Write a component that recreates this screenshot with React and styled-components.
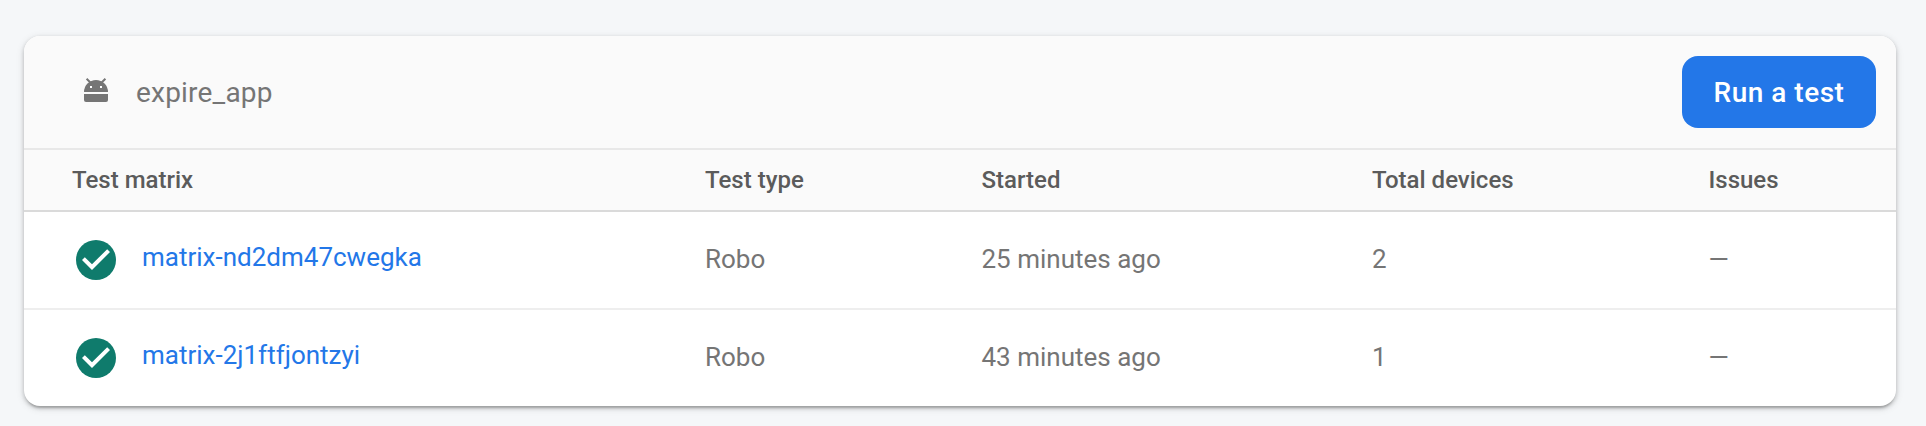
import React from "react";
import styled, { createGlobalStyle } from "styled-components";

const GlobalStyle = createGlobalStyle`
  * { box-sizing: border-box; }
  body {
    margin: 0;
    background: #f5f7f9;
    font-family: Roboto, "Liberation Sans", sans-serif;
    -webkit-font-smoothing: antialiased;
  }
`;

const Page = styled.main`
  height: 426px;
  padding: 36px 30px 20px 24px;
  overflow: hidden;
`;

const Card = styled.section`
  width: 1872px;
  border-radius: 16px;
  background: #fff;
  box-shadow: 0 4px 2px -2px rgba(0, 0, 0, 0.16), 0 2px 4px rgba(0, 0, 0, 0.2),
    0 2px 8px rgba(0, 0, 0, 0.12);
`;

const CardHeader = styled.header`
  display: flex;
  align-items: center;
  height: 114px;
  padding: 0 20px 0 48px;
  border-bottom: 2px solid #e8e8e8;
  border-radius: 16px 16px 0 0;
  background: #fafafa;
`;

const AppName = styled.h2`
  flex: 1;
  margin: 0 0 0 16px;
  padding-top: 2px;
  font-size: 28px;
  line-height: 40px;
  font-weight: 400;
  letter-spacing: 0.2px;
  color: #757575;
`;

const RunButton = styled.button`
  width: 194px;
  height: 72px;
  padding: 2px 0 0;
  border: 0;
  border-radius: 16px;
  background: #2377e8;
  color: #fff;
  font: 500 28px/40px Roboto, "Liberation Sans", sans-serif;
  letter-spacing: 0.5px;
`;

const GridRow = styled.div`
  display: grid;
  grid-template-columns: 633px 276.5px 390.5px 336.5px 1fr;
  align-items: center;
  padding-left: 48px;
`;

const HeadRow = styled(GridRow)`
  height: 62px;
  border-bottom: 2px solid #dadada;
  background: #fafafa;
  color: #5b5b5b;
  font-size: 24px;
  font-weight: 500;
`;

const BodyRow = styled(GridRow)`
  height: 98px;
  border-bottom: 2px solid #eeeeee;
  color: #757575;
  font-size: 26px;

  &:last-child {
    height: 96px;
    border-bottom: 0;
  }
`;

const MatrixCell = styled.div`
  display: flex;
  align-items: center;
  gap: 22px;
`;

const MatrixLink = styled.a`
  padding-bottom: 6px;
  color: #2377e8;
  text-decoration: none;
`;

const HeadCell = styled.span`
  white-space: nowrap;
`;

const Cell = styled.span`
  padding-bottom: 2px;
  white-space: nowrap;
`;

const Icon = styled.svg`
  flex: none;
  display: block;
  width: 48px;
  height: 48px;
`;

const AndroidIcon = () => (
  <Icon viewBox="0 0 48 48" fill="#757575">
    <path d="M12 24a12 12 0 0 1 24 0z" />
    <path d="M14.6 10.8l5 5M33.4 10.8l-5 5" stroke="#757575" strokeWidth="2" />
    <rect x="18" y="18" width="2" height="2" fill="#fff" />
    <rect x="28" y="18" width="2" height="2" fill="#fff" />
    <path d="M12 26h24v6a2 2 0 0 1-2 2H14a2 2 0 0 1-2-2z" />
  </Icon>
);

const PassedIcon = () => (
  <Icon viewBox="0 0 24 24">
    <circle cx="12" cy="12" r="10" fill="#0f7b6c" />
    <path fill="#fff" d="M10 17l-5-5 1.41-1.41L10 14.17l7.59-7.59L19 8z" />
  </Icon>
);

const COLUMNS = ["Test matrix", "Test type", "Started", "Total devices", "Issues"];

const RUNS = [
  { id: "matrix-nd2dm47cwegka", type: "Robo", started: "25 minutes ago", devices: 2 },
  { id: "matrix-2j1ftfjontzyi", type: "Robo", started: "43 minutes ago", devices: 1 },
];

export default function App() {
  return (
    <>
      <GlobalStyle />
      <Page>
        <Card>
          <CardHeader>
            <AndroidIcon />
            <AppName>expire_app</AppName>
            <RunButton>Run a test</RunButton>
          </CardHeader>
          <HeadRow>
            {COLUMNS.map((c) => (
              <HeadCell key={c}>{c}</HeadCell>
            ))}
          </HeadRow>
          {RUNS.map((r) => (
            <BodyRow key={r.id}>
              <MatrixCell>
                <PassedIcon />
                <MatrixLink>{r.id}</MatrixLink>
              </MatrixCell>
              <Cell>{r.type}</Cell>
              <Cell>{r.started}</Cell>
              <Cell>{r.devices}</Cell>
              <Cell>—</Cell>
            </BodyRow>
          ))}
        </Card>
      </Page>
    </>
  );
}
